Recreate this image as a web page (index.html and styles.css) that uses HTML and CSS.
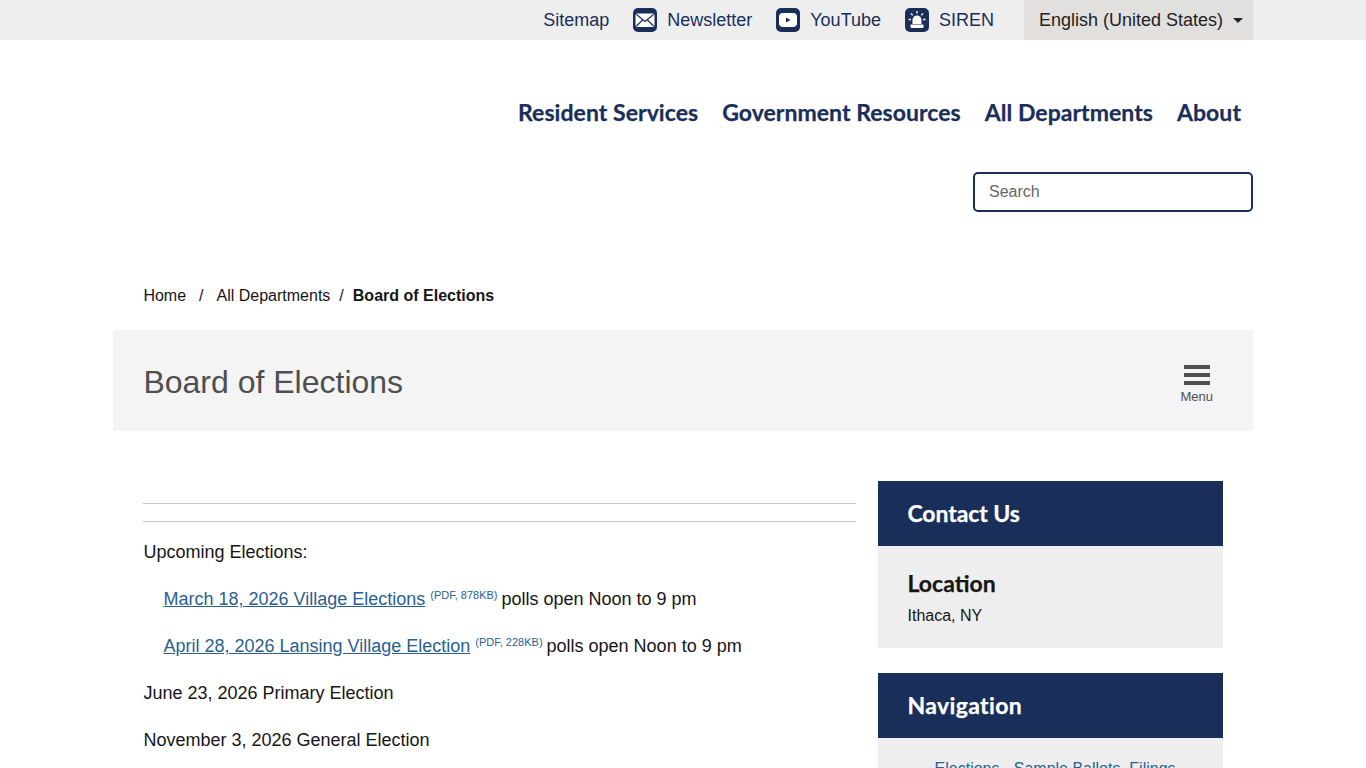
FILE: index.html
```html
<!DOCTYPE html>
<html lang="en">
<head>
<meta charset="utf-8">
<title>Board of Elections</title>
<link rel="stylesheet" href="styles.css">
</head>
<body>
<div class="topbar">
  <div class="container topbar-inner">
    <a class="top-link" href="#">Sitemap</a>
    <a class="top-link" href="#">
      <svg class="top-icon" viewBox="0 0 24 24"><rect width="24" height="24" rx="5" fill="#1a2e5a"/><rect x="2.500" y="5.500" width="19" height="13.500" rx="2" fill="#fff"/><path d="M3.500 6.500L12 13.500l8.500-7M3.500 18l6-6M20.500 18l-6-6" fill="none" stroke="#1a2e5a" stroke-width="1.200"/></svg>
      Newsletter
    </a>
    <a class="top-link" href="#">
      <svg class="top-icon" viewBox="0 0 24 24"><rect width="24" height="24" rx="5" fill="#1a2e5a"/><rect x="3" y="5" width="18" height="14" rx="4" fill="#fff"/><path d="M10 9.500l4.500 2.500-4.500 2.500z" fill="#1a2e5a"/></svg>
      YouTube
    </a>
    <a class="top-link" href="#">
      <svg class="top-icon" viewBox="0 0 24 24"><rect width="24" height="24" rx="5" fill="#1a2e5a"/><path d="M7.500 16v-4a4.500 4.500 0 0 1 9 0v4z" fill="#fff"/><rect x="5.500" y="16.500" width="13" height="3.500" rx=".7" fill="#fff"/><path d="M12 3v2.500M6 5.500l1.700 1.700M18 5.500l-1.700 1.700M3.500 11.500H6M18 11.500h2.500" stroke="#fff" stroke-width="1.300" fill="none"/></svg>
      SIREN
    </a>
    <div class="lang">English (United States)<span class="caret"></span></div>
  </div>
</div>

<header class="container header">
  <nav class="main-nav">
    <a href="#">Resident Services</a>
    <a href="#">Government Resources</a>
    <a href="#">All Departments</a>
    <a href="#">About</a>
  </nav>
  <input class="search" type="text" placeholder="Search">
</header>

<div class="container">
  <ol class="crumbs">
    <li><a href="#">Home</a></li>
    <li class="sep sep-wide">/</li>
    <li><a href="#">All Departments</a></li>
    <li class="sep">/</li>
    <li class="current">Board of Elections</li>
  </ol>

  <div class="title-band">
    <h1>Board of Elections</h1>
    <button class="menu-btn" type="button">
      <span class="bars"><i></i><i></i><i></i></span>
      <span class="menu-label">Menu</span>
    </button>
  </div>

  <div class="columns">
    <main class="content">
      <hr class="rule">
      <hr class="rule rule-second">
      <p>Upcoming Elections:</p>
      <p class="indent"><a href="#">March 18, 2026 Village Elections</a> <sup>(PDF, 878KB)</sup> polls open Noon to 9 pm</p>
      <p class="indent"><a href="#">April 28, 2026 Lansing Village Election</a> <sup>(PDF, 228KB)</sup> polls open Noon to 9 pm</p>
      <p>June 23, 2026 Primary Election</p>
      <p>November 3, 2026 General Election</p>
    </main>
    <aside class="sidebar">
      <section class="card">
        <h2 class="card-head">Contact Us</h2>
        <div class="card-body">
          <h3>Location</h3>
          <p>Ithaca, NY</p>
        </div>
      </section>
      <section class="card">
        <h2 class="card-head card-head-wide">Navigation</h2>
        <div class="card-body nav-body">
          <a href="#">Elections - Sample Ballots, Filings</a>
        </div>
      </section>
    </aside>
  </div>
</div>
</body>
</html>
```
FILE: styles.css
```css
* { box-sizing: border-box; }
html { height: 768px; overflow: hidden; }
body {
  margin: 0;
  font-family: "Liberation Sans", Arial, sans-serif;
  font-size: 18px;
  line-height: 27px;
  color: #161616;
  background: #fff;
}
.container { width: 1140px; margin-left: 113px; }

.topbar { height: 40px; background: #eee; }
.topbar-inner { display: flex; justify-content: flex-end; align-items: center; height: 40px; }
.top-link {
  display: flex;
  align-items: center;
  gap: 10px;
  margin-right: 24px;
  color: #1a2e5a;
  text-decoration: none;
}
.top-icon { width: 24px; height: 24px; }
.lang {
  display: flex;
  align-items: center;
  height: 40px;
  width: 229px;
  margin-left: 6px;
  padding-left: 15px;
  background: #e2e0de;
  color: #222;
}
.caret {
  margin-left: 10px;
  border-top: 5px solid #222;
  border-left: 5px solid transparent;
  border-right: 5px solid transparent;
}

.header { display: flex; flex-direction: column; align-items: flex-end; }
.main-nav { display: flex; gap: 24px; margin-top: 56px; padding-right: 12px; }
.main-nav a {
  font-family: Lato, sans-serif;
  font-weight: 700;
  font-size: 23px;
  line-height: 33px;
  letter-spacing: .05px;
  -webkit-text-stroke: .25px #1a2e5a;
  color: #1a2e5a;
  text-decoration: none;
}
.search {
  width: 280px;
  height: 40px;
  margin-top: 43px;
  padding: 0 14px;
  border: 2px solid #1a2e5a;
  border-radius: 5px;
  font: 16px "Liberation Sans", Arial, sans-serif;
  color: #555;
}
.search::placeholder { color: #666; opacity: 1; }

.crumbs {
  display: flex;
  list-style: none;
  margin: 72px 0 0;
  padding: 0 0 0 30.400px;
  font-size: 16px;
  line-height: 24px;
}
.crumbs a { color: #161616; text-decoration: none; }
.sep { margin: 0 9px; }
.sep-wide { margin: 0 13px; }
.current { font-weight: 700; }

.title-band {
  display: flex;
  justify-content: space-between;
  align-items: center;
  height: 101px;
  margin-top: 22px;
  padding: 0 40px 0 30.400px;
  background: #f4f4f4;
}
h1 { margin: 2px 0 0; font-size: 32px; font-weight: 400; line-height: 40px; color: #4f4f4f; }
.menu-btn {
  display: flex;
  flex-direction: column;
  align-items: center;
  margin-top: 8px;
  padding: 0;
  border: 0;
  background: none;
  color: #4f4f4f;
  font: 13px "Liberation Sans", Arial, sans-serif;
}
.bars { display: flex; flex-direction: column; gap: 4px; width: 26px; }
.bars i { display: block; height: 4px; background: #4f4f4f; }
.menu-label { line-height: 16px; margin-top: 4px; }

.columns { display: flex; gap: 22px; padding: 50px 30px 0; }
.content { width: 713px; padding-top: 22px; }
.rule { margin: 0; border: 0; border-top: 1px solid #c8c8c8; }
.rule-second { margin-top: 17px; }
.content p { margin: 0 0 20px .4px; }
.content .rule-second + p { margin-top: 17px; }
.indent { padding-left: 20px; }
.content a { color: #2a5f8f; }
sup { margin-right: -1px; font-size: 11px; line-height: 0; color: #2a5f8f; vertical-align: 6px; }

.sidebar { width: 345px; display: flex; flex-direction: column; gap: 25px; }
.card-head {
  margin: 0;
  height: 65px;
  padding: 0 29.500px;
  display: flex;
  align-items: center;
  background: #1a2e5a;
  color: #fff;
  font-family: Lato, sans-serif;
  font-weight: 700;
  font-size: 23px;
  letter-spacing: -.1px;
  -webkit-text-stroke: .25px #fff;
}
.card-head-wide { letter-spacing: .35px; }
.card-body { padding: 22px 29.500px 20px; background: #eee; font-size: 16px; line-height: 24px; }
.card-body h3 {
  margin: 0 0 6px;
  font-family: Lato, sans-serif;
  font-weight: 700;
  font-size: 23px;
  line-height: 30px;
  -webkit-text-stroke: .25px #161616;
}
.card-body p { margin: 0; }
.nav-body { padding: 19px 30px 20px 56.600px; }
.nav-body a { color: #2a5f8f; text-decoration: none; }
```
